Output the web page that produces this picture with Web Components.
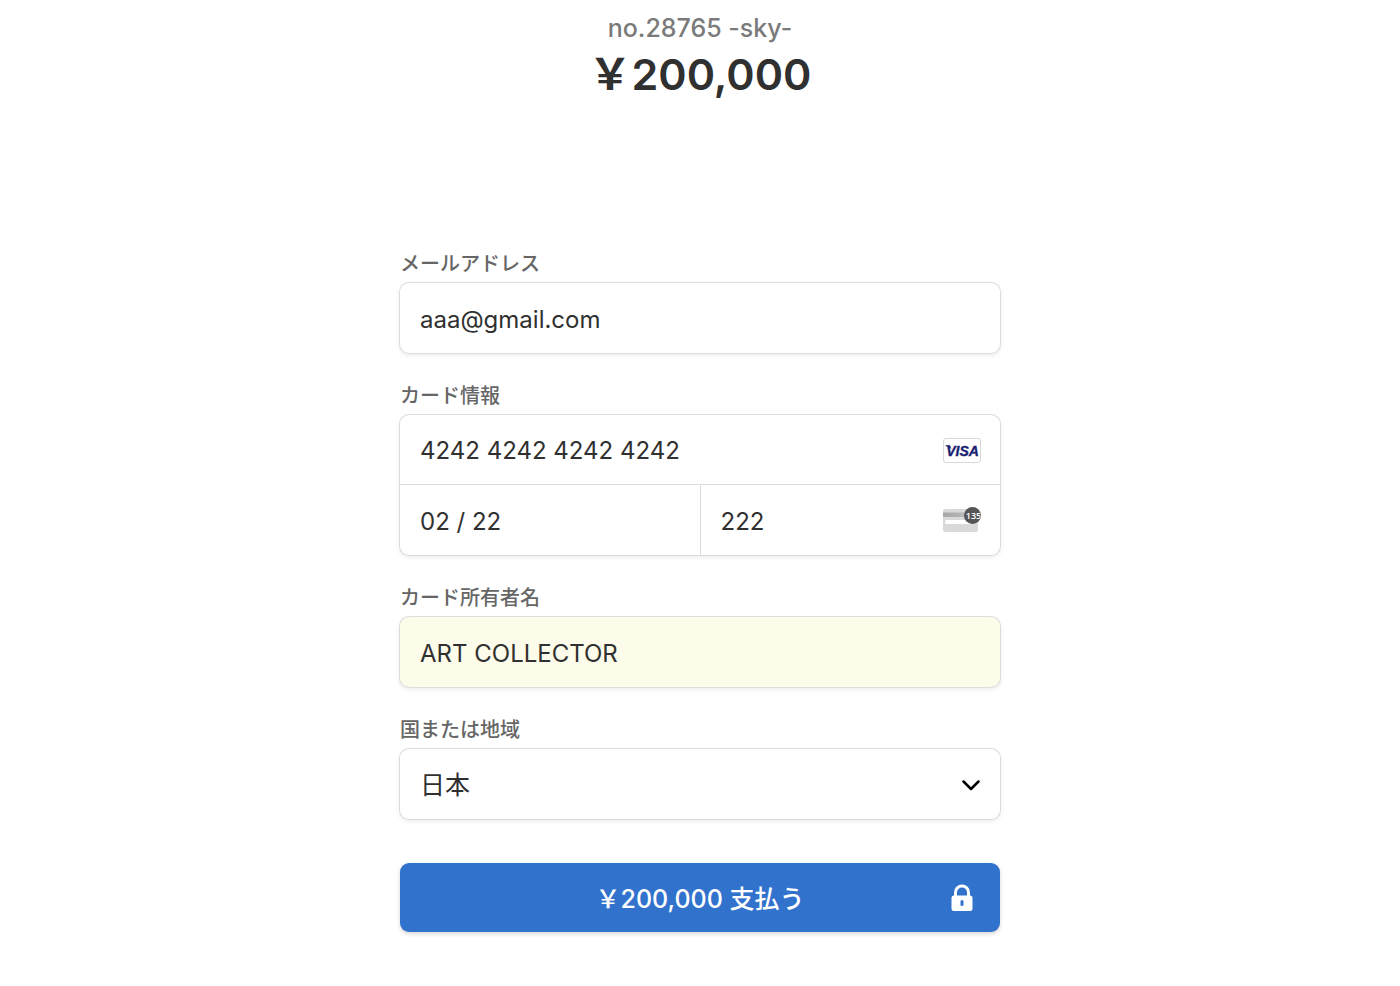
<!DOCTYPE html>
<html lang="ja">
<head>
  <meta charset="UTF-8">
  <meta name="viewport" content="width=device-width, initial-scale=1.0">
  <title>no.28765 -sky-</title>
  <style>
    body {
      margin: 0;
      background: #ffffff;
      color: #303030;
      font-family: Inter, "Noto Sans CJK JP", sans-serif;
      --line: #dcdcdc;
      --muted: #666666;
      --box-shadow: 0 0 0 1px #dcdcdc, 0 2px 4px 1px rgba(0, 0, 0, 0.07);
    }
  </style>
</head>
<body>
  <checkout-page>
    <order-summary slot="summary" name="no.28765 -sky-" amount="￥200,000"></order-summary>
    <text-field label="メールアドレス" type="email" value="aaa@gmail.com"></text-field>
    <card-field label="カード情報" number="4242 4242 4242 4242" expiry="02 / 22" cvc="222"></card-field>
    <text-field label="カード所有者名" type="text" value="ART COLLECTOR" filled></text-field>
    <country-field label="国または地域" value="日本"></country-field>
    <pay-button>￥200,000 支払う</pay-button>
  </checkout-page>

  <script>
    // Styles shared by every kind of field
    const fieldStyles = `
      :host {
        display: block;
      }

      label.title {
        display: block;
        margin-bottom: 6px;
        font-size: 20px;
        font-weight: 500;
        line-height: 26px;
        color: var(--muted);
      }

      .box {
        border-radius: 9px;
        background: #ffffff;
        box-shadow: var(--box-shadow);
      }

      input, select {
        display: block;
        box-sizing: border-box;
        width: 100%;
        height: 70px;
        margin: 0;
        padding: 2px 20px 0;
        border: 0;
        border-radius: 9px;
        background: transparent;
        color: inherit;
        font-family: inherit;
        font-size: 24px;
        appearance: none;
        outline: none;
      }
    `;

    class CheckoutPage extends HTMLElement {
      constructor() {
        super();
        this.attachShadow({ mode: "open" });
      }

      connectedCallback() {
        this.shadowRoot.innerHTML = `
          <style>
            :host {
              display: block;
              padding: 12px 20px 48px;
            }

            form {
              display: flex;
              flex-direction: column;
              gap: 30px;
              max-width: 600px;
              margin: 147px auto 0;
            }
          </style>
          <slot name="summary"></slot>
          <form>
            <slot></slot>
          </form>
        `;
      }
    }

    class OrderSummary extends HTMLElement {
      constructor() {
        super();
        this.attachShadow({ mode: "open" });
      }

      connectedCallback() {
        this.shadowRoot.innerHTML = `
          <style>
            :host {
              display: block;
              text-align: center;
            }

            p {
              margin: 0;
              font-size: 25px;
              font-weight: 500;
              line-height: 32px;
              color: #7a7a7a;
            }

            h1 {
              margin: 0;
              font-size: 43px;
              font-weight: 600;
              line-height: 60px;
            }
          </style>
          <p>${this.getAttribute("name")}</p>
          <h1>${this.getAttribute("amount")}</h1>
        `;
      }
    }

    class TextField extends HTMLElement {
      constructor() {
        super();
        this.attachShadow({ mode: "open" });
      }

      connectedCallback() {
        this.shadowRoot.innerHTML = `
          <style>
            ${fieldStyles}

            :host([filled]) .box {
              background: #fdfbe9;
            }
          </style>
          <label class="title" for="field">${this.getAttribute("label")}</label>
          <div class="box">
            <input id="field" type="${this.getAttribute("type")}" value="${this.getAttribute("value")}">
          </div>
        `;
      }
    }

    class CardField extends HTMLElement {
      constructor() {
        super();
        this.attachShadow({ mode: "open" });
      }

      connectedCallback() {
        this.shadowRoot.innerHTML = `
          <style>
            ${fieldStyles}

            .row {
              display: flex;
            }

            .row + .row {
              border-top: 1px solid var(--line);
            }

            .cell {
              display: flex;
              flex: 1;
              align-items: center;
              min-width: 0;
            }

            .cell:not(:last-child) {
              border-right: 1px solid var(--line);
            }

            .cell {
              box-sizing: border-box;
            }

            .cell input {
              flex: 1;
              min-width: 0;
            }

            .row:first-child input {
              height: 69px;
            }

            svg {
              flex: none;
              margin-right: 18px;
            }
          </style>
          <label class="title" for="number">${this.getAttribute("label")}</label>
          <div class="box">
            <div class="row">
              <div class="cell">
                <input id="number" type="text" inputmode="numeric" value="${this.getAttribute("number")}">
                <svg width="40" height="26" viewBox="0 0 40 26">
                  <rect x="1.5" y="1.5" width="37" height="24" rx="2.5" fill="#fff" stroke="#d9d9d9"/>
                  <path d="M3.5 8.3h4.500l1.500 4C8 10.500 6 9.300 3.500 9z" fill="#1a1f71"/>
                  <text x="20.500" y="18.500" text-anchor="middle" font-family="Liberation Sans, sans-serif" font-size="14" font-weight="700" font-style="italic" fill="#1a1f71" stroke="#1a1f71" stroke-width="0.400">VISA</text>
                </svg>
              </div>
            </div>
            <div class="row">
              <div class="cell">
                <input type="text" inputmode="numeric" aria-label="有効期限" value="${this.getAttribute("expiry")}">
              </div>
              <div class="cell">
                <input type="text" inputmode="numeric" aria-label="セキュリティコード" value="${this.getAttribute("cvc")}">
                <svg width="40" height="28" viewBox="0 0 40 28">
                  <defs>
                    <clipPath id="badge"><circle cx="30.500" cy="9.500" r="8.300"/></clipPath>
                    <linearGradient id="stripe">
                      <stop offset="0" stop-color="#a6a6a6"/>
                      <stop offset="1" stop-color="#c4c4c4"/>
                    </linearGradient>
                  </defs>
                  <rect x="1" y="3" width="35" height="23" rx="2.500" fill="#d9d9d9"/>
                  <rect x="1" y="6.500" width="35" height="4.500" fill="url(#stripe)"/>
                  <rect x="3" y="14" width="26" height="4" rx="1.500" fill="#fff"/>
                  <circle cx="30.500" cy="9.500" r="8.500" fill="#555"/>
                  <text x="31.500" y="13" text-anchor="middle" font-family="Open Sans, sans-serif" font-size="9" font-weight="600" fill="#fff" clip-path="url(#badge)">135</text>
                </svg>
              </div>
            </div>
          </div>
        `;
      }
    }

    class CountryField extends HTMLElement {
      constructor() {
        super();
        this.attachShadow({ mode: "open" });
      }

      connectedCallback() {
        this.shadowRoot.innerHTML = `
          <style>
            ${fieldStyles}

            .box {
              display: grid;
              align-items: center;
            }

            select, svg {
              grid-area: 1 / 1;
            }

            select {
              font-size: 25px;
            }

            svg {
              justify-self: end;
              margin-right: 18px;
              pointer-events: none;
            }
          </style>
          <label class="title" for="country">${this.getAttribute("label")}</label>
          <div class="box">
            <select id="country">
              <option>${this.getAttribute("value")}</option>
            </select>
            <svg width="22" height="16" viewBox="0 0 22 16">
              <path d="M3.500 5.500l7.500 7.500L18.500 5.500" fill="none" stroke="#000" stroke-width="2.500" stroke-linecap="round" stroke-linejoin="round"/>
            </svg>
          </div>
        `;
      }
    }

    class PayButton extends HTMLElement {
      constructor() {
        super();
        this.attachShadow({ mode: "open" });
      }

      connectedCallback() {
        this.shadowRoot.innerHTML = `
          <style>
            :host {
              display: block;
              margin-top: 14px;
            }

            button {
              display: grid;
              grid-template-columns: 1fr auto 1fr;
              align-items: center;
              width: 100%;
              height: 69px;
              padding: 0 26px;
              border: 0;
              border-radius: 9px;
              background: #3172cd;
              box-shadow: 0 2px 4px rgba(0, 0, 0, 0.16);
              color: #ffffff;
              font-family: inherit;
              font-size: 25px;
              font-weight: 500;
              cursor: pointer;
            }

            span {
              grid-column: 2;
              padding-bottom: 2px;
            }

            svg {
              justify-self: end;
            }
          </style>
          <button type="button">
            <span><slot></slot></span>
            <svg width="24" height="28" viewBox="0 0 24 28">
              <path d="M5.500 12V8.500a6.500 6.500 0 0 1 13 0V12" fill="none" stroke="#fff" stroke-width="3"/>
              <rect x="1.500" y="11.500" width="21" height="15.500" rx="2.500" fill="#fff"/>
              <rect x="10.500" y="16" width="3" height="6" rx="1.500" fill="#3172cd"/>
            </svg>
          </button>
        `;
      }
    }

    customElements.define("checkout-page", CheckoutPage);
    customElements.define("order-summary", OrderSummary);
    customElements.define("text-field", TextField);
    customElements.define("card-field", CardField);
    customElements.define("country-field", CountryField);
    customElements.define("pay-button", PayButton);
  </script>
</body>
</html>
